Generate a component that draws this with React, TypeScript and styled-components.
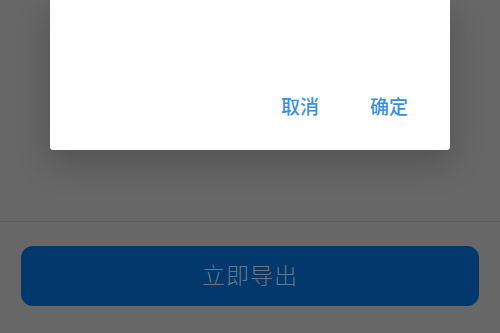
import React from "react";
import styled, { createGlobalStyle } from "styled-components";

const Global = createGlobalStyle`
  html, body {
    margin: 0;
    padding: 0;
    background: #676767;
  }
  body {
    font-family: "Noto Sans CJK SC", "Noto Sans", sans-serif;
  }
`;

const Screen = styled.div`
  width: 500px;
  height: 333px;
  overflow: hidden;
  background: #676767;
  display: flex;
  flex-direction: column;
`;

const Dialog = styled.div`
  margin: 0 50px;
  height: 150px;
  background: #ffffff;
  border-radius: 0 0 3px 3px;
  box-shadow: 0 12px 34px rgba(0, 0, 0, 0.22);
  display: flex;
  flex-direction: column;
  justify-content: flex-end;
`;

const Actions = styled.div`
  display: flex;
  justify-content: flex-end;
  gap: 51px;
  padding: 0 42px 32px 0;
`;

const ActionButton = styled.button`
  border: none;
  background: none;
  padding: 0;
  font-family: inherit;
  font-size: 19px;
  line-height: 24px;
  font-weight: 500;
  color: #3a8fe0;
  cursor: pointer;
`;

const Divider = styled.div`
  margin-top: 71px;
  height: 1px;
  background: #5b5b5b;
`;

const Footer = styled.div`
  padding: 24px 21px 0;
`;

const ExportButton = styled.button`
  width: 100%;
  height: 60px;
  border: none;
  border-radius: 12px;
  padding: 0 0 4px;
  background: #02386b;
  color: #67778a;
  font-family: inherit;
  font-size: 23px;
  font-weight: 300;
  letter-spacing: 1px;
`;

export default function App() {
  return (
    <>
      <Global />
      <Screen>
        <Dialog>
          <Actions>
            <ActionButton>取消</ActionButton>
            <ActionButton>确定</ActionButton>
          </Actions>
        </Dialog>
        <Divider />
        <Footer>
          <ExportButton>立即导出</ExportButton>
        </Footer>
      </Screen>
    </>
  );
}
